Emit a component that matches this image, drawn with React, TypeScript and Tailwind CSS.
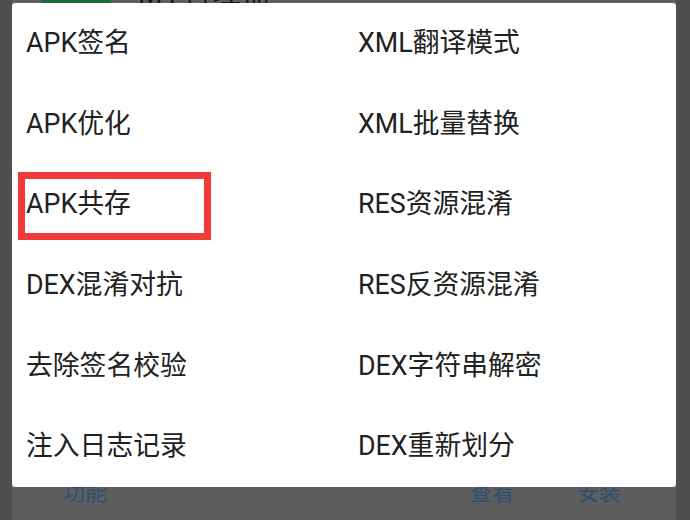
import React from "react";

const left = ["APK签名", "APK优化", "APK共存", "DEX混淆对抗", "去除签名校验", "注入日志记录"];
const right = ["XML翻译模式", "XML批量替换", "RES资源混淆", "RES反资源混淆", "DEX字符串解密", "DEX重新划分"];

export default function App() {
  const items: string[] = [];
  for (let i = 0; i < 6; i++) {
    items.push(left[i], right[i]);
  }
  return (
    <div
      className="relative w-[690px] h-[520px] overflow-hidden flex bg-[#5e5e5e]"
      style={{ fontFamily: 'Roboto, "Noto Sans CJK SC", sans-serif' }}
    >
      <div className="w-[12px] h-full bg-[#4f4f4f]" />
      <div className="flex-1 h-full flex flex-col">
        <div className="flex items-end h-[24px] -mt-[18px] pl-[30px] gap-[28px]">
          <div className="w-[68px] h-[24px] bg-[#1e6b36]" />
          <div className="text-[28px] leading-[24px] text-[#151515] tracking-[2px] whitespace-nowrap">MT管理器</div>
        </div>
        <div className="flex-1" />
        <div className="flex items-start h-[40px] text-[22px] leading-[26px] text-[#2b4e72]">
          <span className="ml-[51px]">功能</span>
          <span className="ml-[363px]">查看</span>
          <span className="ml-[63px]">安装</span>
        </div>
      </div>
      <div className="w-[14px] h-full bg-[#4f4f4f]" />

      <div className="absolute left-[12px] top-[3px] w-[664px] h-[484px] bg-white rounded-[3px] grid grid-cols-2 grid-rows-6">
        {items.map((t, i) => (
          <div key={i} className="flex items-center pl-[14px] text-[26.8px] text-[#212121] leading-none">
            {t}
          </div>
        ))}
      </div>

      <div className="absolute left-[18px] top-[172px] w-[193px] h-[68px] border-[7px] border-[#f33a3a]" />
    </div>
  );
}
